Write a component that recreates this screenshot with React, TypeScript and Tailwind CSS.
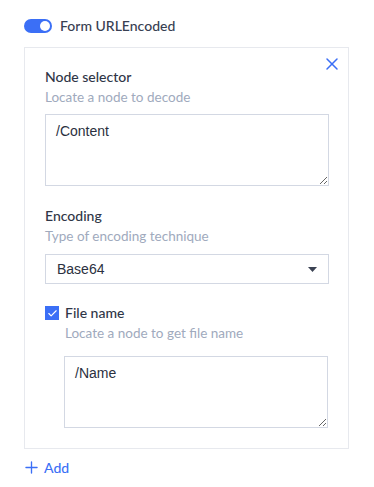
import { X, Plus, Check } from "lucide-react";

const font = { fontFamily: "Lato, 'Noto Sans', sans-serif" };
const mono = { fontFamily: "'Liberation Sans', Arial, sans-serif" };

function Toggle() {
  return (
    <div className="flex h-[14px] w-[28px] items-center justify-end rounded-full bg-[#3b6ff6] pr-[2px]">
      <div className="h-[10px] w-[10px] rounded-full bg-white" />
    </div>
  );
}

function Field({ label, hint }: { label: string; hint: string }) {
  return (
    <div>
      <div className="text-[14px] leading-[20px] font-medium text-[#2f3647]">{label}</div>
      <div className="text-[13.5px] leading-[20px] text-[#a0aabd]">{hint}</div>
    </div>
  );
}

export default function App() {
  return (
    <div className="min-h-[487px] bg-white px-[24px] pt-[19px] text-[#2f3647]" style={font}>
      <div className="flex items-center gap-[8px]">
        <Toggle />
        <span className="text-[14px] leading-[14px] font-medium text-[#384052]">Form URLEncoded</span>
      </div>

      <div className="relative mt-[14px] w-[325px] border border-[#e7e9ee] px-[20px] pt-[19px] pb-[20px]">
        <button className="absolute top-[6px] right-[6px] text-[#3b6ff6]">
          <X size={20} strokeWidth={1.8} />
        </button>

        <Field label="Node selector" hint="Locate a node to decode" />
        <textarea
          defaultValue="/Content"
          className="mt-[7px] block h-[72px] w-[284px] border border-[#d3d8e3] px-[10px] py-[6px] text-[14px] text-[#2b3140] outline-none"
          style={mono}
        />

        <div className="mt-[20px]">
          <Field label="Encoding" hint="Type of encoding technique" />
        </div>
        <div className="mt-[8px] flex h-[30px] w-[284px] items-center justify-between border border-[#d3d8e3] pr-[11px] pl-[11px]">
          <span className="text-[14px] text-[#2b3140]" style={mono}>
            Base64
          </span>
          <svg width="9" height="5" viewBox="0 0 9 5">
            <path d="M0 0h9L4.5 5z" fill="#3b4253" />
          </svg>
        </div>

        <div className="mt-[19px] flex gap-[6px]">
          <div className="mt-[3px] flex h-[14px] w-[14px] items-center justify-center bg-[#3b6ff6]">
            <Check size={11} strokeWidth={2.5} className="text-white" />
          </div>
          <div>
            <Field label="File name" hint="Locate a node to get file name" />
          </div>
        </div>
        <textarea
          defaultValue="/Name"
          className="mt-[13px] ml-[19px] block h-[72px] w-[264px] border border-[#d3d8e3] px-[10px] py-[6px] text-[14px] text-[#2b3140] outline-none"
          style={mono}
        />
      </div>

      <button className="mt-[8px] flex items-center gap-[3px] text-[14px] font-medium text-[#3b6ff6]">
        <Plus size={19} strokeWidth={1.7} className="-ml-[2px]" />
        Add
      </button>
    </div>
  );
}
